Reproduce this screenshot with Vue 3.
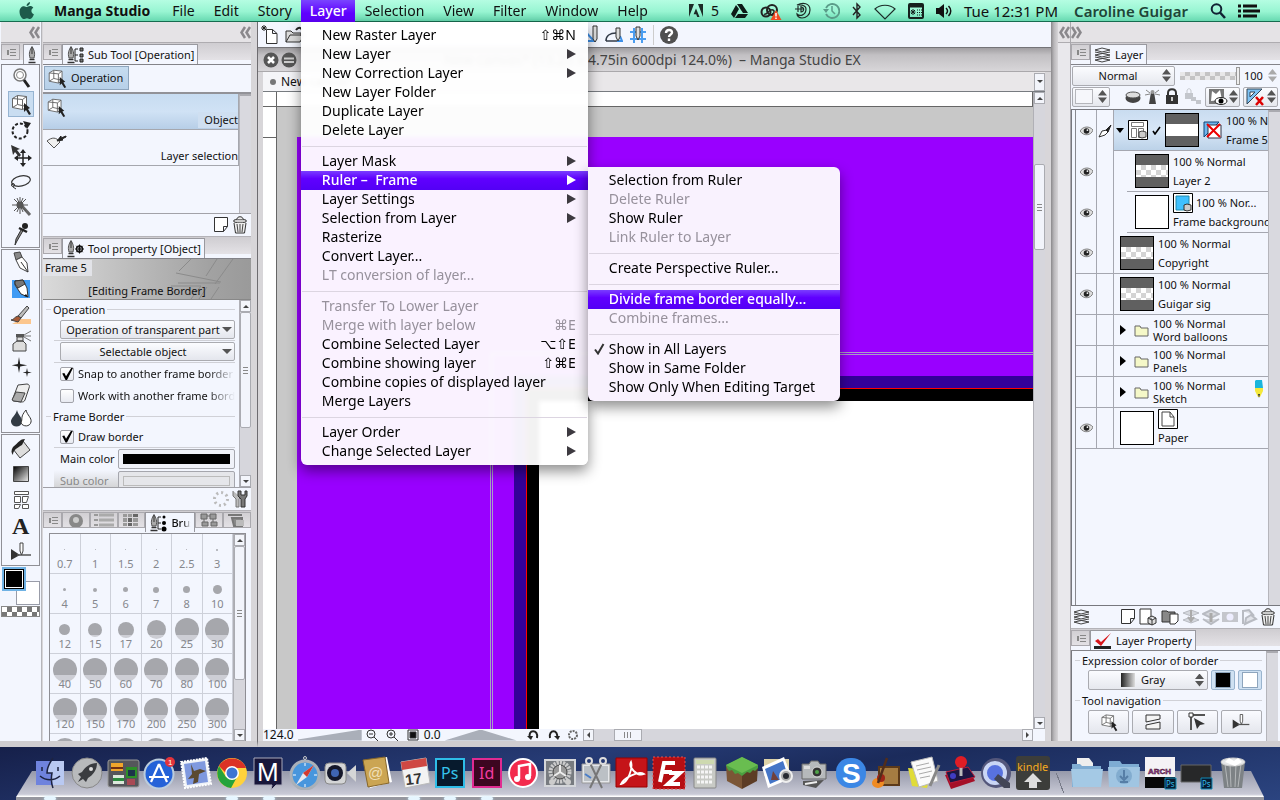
<template>
  <div class="desktop">
    <header class="menubar">
      <a class="apple" href="#" aria-label="Apple">
        <svg width="18" height="18" viewBox="0 0 18 18">
          <path d="M12 0c.2 2-1.500 4-3.400 4C8.400 2 10.200.4 12 0zM8.800 5c.8 0 1.600-.9 3.200-.9 1.500 0 2.700.7 3.300 1.700-2.800 1.600-2.300 5.400.6 6.500-.8 2.300-2.200 4.700-3.800 4.700-1.200 0-1.600-.8-3.100-.8s-2 .8-3.100.8C4 17 1.500 13.300 1.500 9.700 1.500 6.200 3.700 4.200 6 4.200c1.300 0 2.100.8 2.800.8z" fill="#1d5a4a" />
        </svg>
      </a>
      <nav class="menus">
        <div v-for="menu in menus" :key="menu" class="menu-slot">
          <button :class="['menu-name', { bold: menu === 'Manga Studio', open: menu === 'Layer' }]">{{ menu }}</button>
          <div v-if="menu === 'Layer'" class="dropdown layer-menu">
            <template v-for="(item, i) in layerMenu" :key="i">
              <hr v-if="item.sep" />
              <button v-else :class="['menu-item', { active: item.active }]" :disabled="item.off">
                <span>{{ item.text }}</span>
                <span v-if="item.keys" class="keys">{{ item.keys }}</span>
                <span v-if="item.sub" class="arrow"></span>
              </button>
            </template>
            <div class="dropdown ruler-menu">
              <template v-for="(item, i) in rulerMenu" :key="i">
                <hr v-if="item.sep" />
                <button v-else :class="['menu-item', { active: item.active }]" :disabled="item.off">
                  <svg v-if="item.check" class="menu-check" width="12" height="12" viewBox="0 0 12 12">
                    <path d="M2 6.500l3 4L10.500 1" fill="none" stroke="#333" stroke-width="2" />
                  </svg>
                  <span>{{ item.text }}</span>
                </button>
              </template>
            </div>
          </div>
        </div>
      </nav>
      <div class="status">
        <span class="adobe"><svg width="14" height="13" viewBox="0 0 14 13"><path d="M0 0h5L0 13zM9 0h5v13zM7 4.500l3.500 8.500H8.200l-1-2.700H4.600z" fill="#1c2b26" /></svg>5</span>
        <svg v-for="s in statusIcons" :key="s.name" :width="s.width" height="18" :viewBox="`0 0 ${s.width} 18`" v-html="s.art"></svg>
        <span class="clock">Tue 12:31 PM</span>
        <span class="user">Caroline Guigar</span>
        <svg width="16" height="16" viewBox="0 0 16 16"><circle cx="6.500" cy="6" r="4.800" fill="none" stroke="#123" stroke-width="2" /><path d="M10 9.500l5 5.500" stroke="#123" stroke-width="2.500" /></svg>
        <svg width="22" height="14" viewBox="0 0 22 14"><path d="M0 2h3M0 7h3M0 12h3M5 2h14M5 7h17M5 12h14" stroke="#111" stroke-width="3" /></svg>
      </div>
    </header>

    <main class="workspace">
      <aside class="left">
        <div class="tool-column">
          <div class="collapse end"><button aria-label="Collapse"><svg width="11" height="13" viewBox="0 0 11 13" v-html="icons.chevrons"></svg></button></div>
          <div class="strip">
            <span class="strip-menu"></span>
            <span class="tab small"><svg width="10" height="18" viewBox="0 0 10 18" v-html="nib"></svg></span>
          </div>
          <div v-for="(group, g) in tools" :key="g" class="tool-group">
            <button v-for="tool in group" :key="tool" :class="['tool', { selected: tool === 'operation' }]" :aria-label="tool">
              <svg width="24" height="24" viewBox="0 0 24 24" v-html="icons[tool]"></svg>
            </button>
          </div>
          <div class="colors">
            <span class="back-color"></span>
            <span class="front-color"></span>
          </div>
          <div class="clear-color"></div>
        </div>

        <div class="panels">
          <div class="collapse end"><button aria-label="Collapse"><svg width="11" height="13" viewBox="0 0 11 13" v-html="icons.chevrons"></svg></button></div>
          <div class="strip">
            <span class="strip-menu"></span>
            <span class="tab">
              <svg width="18" height="18" viewBox="0 0 18 18"><g v-html="nib"></g><path d="M12 3H9v12h3M9 9h3" fill="none" stroke="#222" /><path d="M14 2h3v3h-3zM14 8h3v3h-3zM14 13h3v3h-3z" fill="#777" stroke="#222" /></svg>
              Sub Tool [Operation]
            </span>
          </div>
          <div class="subtool-group">
            <button class="subtool-tab"><svg width="22" height="22" viewBox="0 0 24 24" v-html="icons.operation"></svg>Operation</button>
          </div>
          <div class="subtool-body">
            <ul class="subtool-list">
              <li class="selected"><svg width="22" height="22" viewBox="0 0 24 24" v-html="icons.operation"></svg><span>Object</span></li>
              <li><svg width="24" height="22" viewBox="0 0 24 22" v-html="icons.layerSelect"></svg><span>Layer selection</span></li>
            </ul>
            <div class="gutter"></div>
          </div>
          <div class="panel-foot">
            <svg width="18" height="18" viewBox="0 0 18 18" v-html="icons.page"></svg>
            <svg width="16" height="18" viewBox="0 0 16 18" v-html="icons.trash"></svg>
          </div>

          <div class="strip">
            <span class="strip-menu"></span>
            <span class="tab">
              <svg width="18" height="18" viewBox="0 0 18 18"><g v-html="nib"></g><circle cx="13.500" cy="9" r="3" fill="none" stroke="#111" stroke-width="1.300" /><path d="M13.500 4.500v9M9 9h9M10.300 5.800l6.400 6.400M16.700 5.800l-6.400 6.400" stroke="#111" /></svg>
              Tool property [Object]
            </span>
          </div>
          <div class="frame-banner">
            <svg class="banner-art" width="80" height="40" viewBox="0 0 80 40"><path d="M20 0L8 12M5 14l45 9M62 0L44 25M7 24h42M35 17L46 0M0 27h30L20 40M36 28l-8 12M48 28l-8 12" fill="none" stroke="#8b8b8b" /></svg>
            <span class="frame-name">Frame 5</span>
            <span class="frame-mode">[Editing Frame Border]</span>
          </div>
          <div class="property-body">
            <form class="properties" @submit.prevent>
              <div class="legend">Operation</div>
              <div class="row line">
                <select v-model="transparent" aria-label="Operation of transparent part"><option>Operation of transparent part</option></select>
              </div>
              <div class="row line">
                <select v-model="selectable" aria-label="Selectable object"><option>Selectable object</option></select>
              </div>
              <label class="row fade"><input v-model="snap" type="checkbox" />Snap to another frame border</label>
              <label class="row fade"><input v-model="work" type="checkbox" />Work with another frame border</label>
              <div class="legend">Frame Border</div>
              <label class="row line"><input v-model="draw" type="checkbox" />Draw border</label>
              <div class="row color"><span>Main color</span><button class="color-button" aria-label="Main color"><i></i></button></div>
              <div class="row color dim"><span>Sub color</span><button class="color-button" aria-label="Sub color"><i></i></button></div>
            </form>
            <div class="scrollbar">
              <button class="up" aria-label="Up"></button>
              <span class="thumb property-thumb"></span>
              <button class="down" aria-label="Down"></button>
            </div>
          </div>
          <div class="panel-foot">
            <svg width="18" height="18" viewBox="0 0 18 18"><circle cx="9" cy="9" r="6.500" fill="none" stroke="#bbb" stroke-width="3" stroke-dasharray="2 3" /></svg>
            <svg width="16" height="18" viewBox="0 0 16 18"><path d="M1 1v5l3 3v8h3V9l2-2" fill="#bbb" stroke="#777" /><path d="M6 1v5l3 3v8h4V9l2-3V1l-2 0v4h-4V1z" fill="#777" stroke="#333" /></svg>
          </div>

          <div class="strip brush-strip">
            <span class="strip-menu"></span>
            <span class="mini-tab"><svg width="18" height="14" viewBox="0 0 18 14"><circle cx="9" cy="8" r="7" fill="#888" /><circle cx="9" cy="7" r="3" fill="#ccc" /></svg></span>
            <span class="mini-tab"><svg width="20" height="14" viewBox="0 0 20 14"><path d="M0 2h4M0 7h4M0 12h4" stroke="#999" stroke-width="2" /><path d="M5 2h15M5 7h15M5 12h15" stroke="#aaa" stroke-width="3" /></svg></span>
            <span class="mini-tab"><svg width="16" height="14" viewBox="0 0 16 14"><path d="M0 1h4v3H0zM5 1h4v3H5zM0 5h4v4H0zM10 5h5v4h-5zM0 10h4v3H0zM10 10h5v3h-5z" fill="#999" /><path d="M10 1h5v3h-5zM5 5h4v4H5zM5 10h4v3H5z" fill="#666" /></svg></span>
            <span class="tab brush-tab">
              <svg width="18" height="18" viewBox="0 0 18 18"><g v-html="nib"></g><path d="M12 3H9v12h3M9 9h3" fill="none" stroke="#222" /><circle cx="15" cy="3" r="1.500" /><circle cx="15" cy="9" r="2" /><circle cx="15" cy="15" r="2.500" /></svg>
              <span>Brush size</span>
            </span>
            <span class="mini-tab"><svg width="18" height="14" viewBox="0 0 18 14"><path d="M1 1h6v5H1zM10 1h6v5h-6zM2 9h6v4H2zM11 9h6v4h-6zM4 6v3M13 6v3M7 3h3" fill="#999" stroke="#666" /></svg></span>
            <span class="mini-tab"><svg width="18" height="14" viewBox="0 0 18 14"><path d="M0 2h14M4 5h10v8H6z" fill="#888" stroke="#777" stroke-width="2" /><path d="M8 7h8v6H8z" fill="#bbb" /></svg></span>
          </div>
          <div class="brush-body">
            <div class="brush-grid">
              <button v-for="brush in brushes" :key="brush.label" class="brush">
                <span class="dot" :style="{ width: brush.size + 'px', height: brush.size + 'px' }"></span>
                <span class="brush-label">{{ brush.label }}</span>
              </button>
            </div>
            <div class="scrollbar">
              <button class="up" aria-label="Up"></button>
              <span class="thumb brush-thumb"></span>
              <button class="down" aria-label="Down"></button>
            </div>
          </div>
        </div>
      </aside>

      <section class="document">
        <div class="toolbar">
          <svg width="18" height="20" viewBox="0 0 18 20"><path d="M5.500 4.500h6l4.500 4V18.500H5.500zM11.500 4.500v4h4.500" fill="#fff" stroke="#333" /><path d="M3 0v6M0 3h6M1 1l4 4M5 1L1 5" stroke="#222" /></svg>
          <svg width="20" height="20" viewBox="0 0 20 20"><path d="M1 17V6h5l2 2h8v3M1 17l4-7h14l-4 7z" fill="#ddd" stroke="#333" /><path d="M11 5c2-3 5-3 6 0" fill="none" stroke="#222" stroke-width="2" /></svg>
          <span class="toolbar-space"></span>
          <svg width="18" height="20" viewBox="0 0 18 20"><path d="M2 16h11L2 4" fill="none" stroke="#3c8fe8" stroke-width="2" /><path d="M12 1h4v13l-2 3-2-3z" fill="#ddd" stroke="#333" /></svg>
          <svg width="18" height="20" viewBox="0 0 18 20"><path d="M1 16c0-5 4-8 10-8M1 16h11" fill="none" stroke="#333b48" stroke-width="1.600" /><path d="M12 16h5l-2-5" fill="none" stroke="#3c8fe8" stroke-width="2" /><path d="M11 3h4v9l-2 4-2-4z" fill="#ddd" stroke="#333" /></svg>
          <svg width="18" height="20" viewBox="0 0 18 20"><path d="M1 7h16M1 14h16M5 3v15M13 3v15" stroke="#4a9df0" stroke-width="2" /><path d="M7 2h4v9l-2 4-2-4z" fill="#ddd" stroke="#333" /></svg>
          <span class="toolbar-rule"></span>
          <svg width="18" height="18" viewBox="0 0 18 18"><circle cx="9" cy="9" r="9" fill="#505050" /><path d="M6 7c0-4 6-4 6-.500 0 2-3 2-3 4.500M9 12.500v2.500" fill="none" stroke="#fff" stroke-width="2.400" /></svg>
        </div>

        <div class="titlebar">
          <div class="window-buttons">
            <svg width="36" height="16" viewBox="0 0 36 16"><circle cx="8" cy="8" r="7.500" fill="#565656" /><path d="M5 5l6 6M11 5l-6 6" stroke="#fff" stroke-width="2.500" /><circle cx="26" cy="8" r="7.500" fill="#565656" /><path d="M21 6.500h10M21 10h10" stroke="#ccc" stroke-width="2" /></svg>
          </div>
          <h1>New canvas* (13.25 x 4.75in 600dpi 124.0%)&nbsp; – Manga Studio EX</h1>
        </div>

        <div class="doc-tabs">
          <span class="doc-tab"><i></i>New canvas*</span>
          <button class="tab-list" aria-label="Tabs"></button>
        </div>

        <div class="canvas-grid">
          <div class="corner"></div>
          <div class="ruler-top"></div>
          <div class="ruler-left"></div>
          <div class="canvas">
            <div class="artboard">
              <div class="guide">
                <div class="bleed">
                  <div class="trim">
                    <div class="frame"></div>
                  </div>
                </div>
              </div>
            </div>
          </div>
          <div class="scrollbar canvas-scroll">
            <button class="up" aria-label="Up"></button>
            <span class="thumb canvas-thumb"></span>
            <button class="down" aria-label="Down"></button>
          </div>
        </div>

        <div class="statusbar">
          <span class="zoom">124.0</span>
          <span class="wedge"></span>
          <svg width="54" height="12" viewBox="0 0 54 12"><g fill="none" stroke="#333"><circle cx="5" cy="5" r="4" /><path d="M3 5h4M8 8l4 4" /><circle cx="25" cy="5" r="4" /><path d="M23 5h4M25 3v4M28 8l4 4" /><path d="M42 1h10v10H42z" /><path d="M44 3h6v6h-6z" fill="#111" /></g></svg>
          <span>0.0</span>
          <span class="wedge wide"></span>
          <svg width="52" height="12" viewBox="0 0 52 12"><path d="M3 9c-3-9 9-9 7 0M23 9c-2-9 9-9 7 0" fill="none" stroke="#222" stroke-width="2" /><path d="M0 7h6l-2 4zM27 7h6l-2 4z" fill="#222" /><circle cx="46" cy="6" r="4" fill="none" stroke="#666" stroke-width="2" stroke-dasharray="2 1" /></svg>
          <div class="hscroll">
            <button class="back" aria-label="Left"></button>
            <span class="hthumb"></span>
            <button class="forward" aria-label="Right"></button>
          </div>
        </div>
      </section>

      <aside class="right">
        <div class="side-column">
          <div class="collapse end"><button aria-label="Collapse"><svg width="11" height="13" viewBox="0 0 11 13" v-html="icons.chevrons"></svg></button></div>
        </div>
        <div class="panels">
          <div class="collapse"><button class="flip" aria-label="Expand"><svg width="11" height="13" viewBox="0 0 11 13" v-html="icons.chevrons"></svg></button></div>
          <div class="strip">
            <span class="strip-menu"></span>
            <span class="tab"><svg width="17" height="16" viewBox="0 0 17 16" v-html="icons.stack"></svg>Layer</span>
          </div>
          <div class="layer-options">
            <span class="stepper mode"><select v-model="blend" aria-label="Blending mode"><option>Normal</option></select></span>
            <input v-model="opacity" class="opacity" type="range" min="0" max="100" aria-label="Opacity" />
            <span class="stepper plain"><input v-model="opacity" class="amount" type="text" aria-label="Opacity value" /></span>
          </div>
          <div class="layer-options">
            <button class="stepper palette" aria-label="Palette color"><i></i></button>
            <svg class="layer-tools" width="78" height="18" viewBox="0 0 78 18">
              <ellipse cx="9" cy="10" rx="7.500" ry="5" fill="#444" /><ellipse cx="9" cy="7" rx="7" ry="3" fill="#ddd" stroke="#555" />
              <path d="M27 4h3l2 12h-7z" fill="#444" /><path d="M22 2l4 3M35 2l-4 3M21 7l5-1M36 7l-5-1" stroke="#888" /><circle cx="28.500" cy="4" r="2" fill="#999" />
              <path d="M44 8V5c0-5 8-5 8 0v3" fill="none" stroke="#333" stroke-width="2" /><rect x="42" y="7" width="12" height="9" fill="#333" /><path d="M48 9v4" stroke="#ccc" stroke-width="2" />
              <path d="M63 5V3c0-3 4-3 4 0v2" fill="none" stroke="#c3c6cc" /><path d="M61 5h8v6h-8zM67 9h5v4h-5zM72 12h5v4h-5z" fill="#c3c6cc" />
            </svg>
            <button class="stepper mask" aria-label="Mask"><svg width="20" height="18" viewBox="0 0 20 18"><path d="M1 1h15v15H1z" fill="#777" /><path d="M3 13l1-10 4 3 4-4 2 10z" fill="#fff" /><ellipse cx="13" cy="13" rx="6" ry="3.500" fill="#fff" stroke="#222" /><circle cx="13" cy="13" r="2.500" /></svg></button>
            <button class="stepper mask" aria-label="Ruler"><svg width="20" height="18" viewBox="0 0 20 18"><path d="M1 1h15L1 16z" fill="#7ec3f5" stroke="#345" /><path d="M4 4h5L4 9z" fill="#fff" stroke="#345" /><path d="M10 9l7 8M17 9l-7 8" stroke="#d00" stroke-width="2.500" /></svg></button>
          </div>
          <div class="layer-body">
            <ul class="layers">
              <li v-for="layer in layers" :key="layer.name" :class="['layer', layer.kind, { selected: layer.selected, child: layer.child }]">
                <button class="eye" aria-label="Visibility"><svg v-if="layer.visible" width="13" height="10" viewBox="0 0 14 10"><path d="M0 5c3-5 10-6 14-1-2 6-10 7-14 1z" fill="#ddd" stroke="#777" /><circle cx="7" cy="5" r="3" fill="#222" /><circle cx="8" cy="4" r="1" fill="#fff" /></svg></button>
                <span class="edit"><svg v-if="layer.selected" width="14" height="14" viewBox="0 0 14 14"><path d="M1 13l3-6 5-1 1 2-3 3z" fill="#fff" stroke="#333" /><path d="M8 6l5-5-3 7z" fill="#222" stroke="#222" /></svg></span>
                <span class="layer-main">
                  <template v-if="layer.selected">
                    <i class="triangle open"></i>
                    <svg width="20" height="20" viewBox="0 0 20 20"><path d="M.5.5h19v19H.5z" fill="#fff" stroke="#000" /><path d="M3.500 2.500h12v4h-12zM3.500 8.500h5v9h-5zM10.500 8.500h5v9h-5z" fill="none" stroke="#777" /><path d="M11 12l3-1 4 1v5l-4 1-3-1z" fill="#ccc" stroke="#444" /></svg>
                    <svg width="9" height="9" viewBox="0 0 9 9"><path d="M1 5l2 3 5-7" fill="none" stroke="#000" stroke-width="1.600" /></svg>
                  </template>
                  <template v-if="layer.kind === 'folder'">
                    <i class="triangle"></i>
                    <svg width="15" height="13" viewBox="0 0 15 13"><path d="M1 2h5l1 2h7v8H1z" fill="#f5f8c8" stroke="#666" /></svg>
                  </template>
                  <span v-else :class="['thumbnail', layer.thumb]"><i></i></span>
                  <svg v-if="layer.selected" width="19" height="20" viewBox="0 0 19 20"><path d="M1 2h15L1 17z" fill="#6fb7ef" stroke="#147" /><path d="M5 5h13v13H5z" fill="#fff" stroke="#334" /><path d="M4 4l13 13M17 4L4 17" stroke="#e00" stroke-width="2" /></svg>
                  <span class="layer-text">
                    <span class="layer-mode">
                      <svg v-if="layer.name.startsWith('Frame b')" width="20" height="20" viewBox="0 0 20 20"><path d="M.5.5h19v19H.5z" fill="#fff" stroke="#000" /><path d="M3 3h13v14H3z" fill="#3fc0ff" stroke="#28a" /><path d="M11 12l3-1 4 1v5l-4 1-3-1z" fill="#ccc" stroke="#333" /></svg>
                      <svg v-if="layer.name === 'Paper'" width="20" height="20" viewBox="0 0 20 20"><path d="M.5.5h19v19H.5z" fill="#fff" stroke="#000" /><path d="M4 3h8l4 5v9H4zM12 3v5h4" fill="none" stroke="#444" /></svg>
                      <template v-else>{{ layer.mode }}</template>
                    </span>
                    <span>{{ layer.name }}</span>
                  </span>
                  <svg v-if="layer.name === 'Sketch'" class="pencil" width="8" height="18" viewBox="0 0 8 18"><path d="M1 0h6l1 8H0V1z" fill="#19b5dc" /><path d="M0 8h8v3l-3 6H3L0 11z" fill="#f4e83a" /><path d="M3 14h2l-1 4z" fill="#333" /></svg>
                </span>
              </li>
            </ul>
            <div class="gutter"></div>
          </div>
          <div class="panel-foot layer-foot">
            <svg width="17" height="16" viewBox="0 0 17 16" v-html="icons.stack"></svg>
            <span class="foot-space"></span>
            <svg width="18" height="18" viewBox="0 0 18 18" v-html="icons.page"></svg>
            <svg width="20" height="18" viewBox="0 0 20 18"><path d="M1 1h11v15H1z" fill="#fff" stroke="#333" /><path d="M9 10l4-2 4 2v5l-4 2-4-2zM9 10l4 2 4-2M13 12v5" fill="#ddd" stroke="#333" /></svg>
            <svg width="19" height="18" viewBox="0 0 19 18"><path d="M1 3h5l1 1h7v10H1z" fill="#888" stroke="#333" /><path d="M9 6h8v7l-3 3H9z" fill="#fff" stroke="#333" /></svg>
            <svg width="18" height="18" viewBox="0 0 18 18"><path d="M1 5l8-3 8 3-8 3zM1 12l8-3 8 3-8 3z" fill="#d5d8de" stroke="#b8bbc2" /><path d="M9 2v10M6 9l3 4 3-4" fill="none" stroke="#aaa" stroke-width="2" /></svg>
            <svg width="18" height="18" viewBox="0 0 18 18"><path d="M1 6l8-4 8 4-8 4zM1 11l8 5 8-5" fill="#d5d8de" stroke="#b8bbc2" stroke-width="2" /><path d="M9 5v9" stroke="#aaa" stroke-width="3" /></svg>
            <svg width="16" height="18" viewBox="0 0 16 18"><path d="M0 4h16v10H0z" fill="#c4c6cc" /><circle cx="8" cy="9" r="3.500" fill="#eef" /></svg>
            <svg width="18" height="18" viewBox="0 0 18 18"><path d="M3 2v14M3 3l6-1 5 6M5 16l4-2 7-3-5-4-5 3z" fill="#e0e2e8" stroke="#b8bbc2" stroke-width="2" /></svg>
            <svg width="16" height="18" viewBox="0 0 16 18" v-html="icons.trash"></svg>
          </div>

          <div class="strip">
            <span class="strip-menu"></span>
            <span class="tab"><svg width="18" height="16" viewBox="0 0 18 16"><path d="M0 13h17v3H0z" fill="#222" /><path d="M1 8l3-2 3 3L17 0 7 13z" fill="#d8151b" /></svg>Layer Property</span>
          </div>
          <div class="layer-property">
            <div class="property-controls">
              <div class="legend">Expression color of border</div>
              <div class="expression">
                <span class="stepper gray"><i></i><select v-model="expression" aria-label="Expression color"><option>Gray</option></select></span>
                <button class="ink black" aria-label="Black"></button>
                <button class="ink" aria-label="White"></button>
              </div>
              <div class="legend">Tool navigation</div>
              <div class="navigation">
                <button aria-label="Object"><svg width="22" height="20" viewBox="0 0 24 24" v-html="icons.operation"></svg></button>
                <button aria-label="Divide frame"><svg width="18" height="18" viewBox="0 0 18 18"><path d="M2 2h14v4L2 9zM2 12l14-3v7H2z" fill="#f4f4f4" stroke="#333" /></svg></button>
                <button aria-label="Edit line"><svg width="20" height="20" viewBox="0 0 20 20"><path d="M4 18V3h14" fill="none" stroke="#555" stroke-width="2" /><path d="M2 1h4v4H2z" fill="#fff" stroke="#333" /><path d="M7 6l11 6-5 1-3 4z" fill="#333" /></svg></button>
                <button aria-label="Ruler"><svg width="22" height="20" viewBox="0 0 24 24" v-html="icons.figure"></svg></button>
              </div>
            </div>
            <div class="gutter"></div>
          </div>
        </div>
      </aside>
    </main>

    <footer class="dock">
      <template v-for="app in dock" :key="app.name">
        <span v-if="app.name === 'divider'" class="dock-divider"></span>
        <a v-else href="#" :aria-label="app.name" :class="['dock-app', { running: app.running }]">
          <svg width="34" height="34" viewBox="0 0 34 34" v-html="app.art"></svg>
        </a>
      </template>
    </footer>
  </div>
</template>

<script setup>
import { ref } from 'vue'

const transparent = ref('Operation of transparent part')
const selectable = ref('Selectable object')
const snap = ref(true)
const work = ref(false)
const draw = ref(true)
const blend = ref('Normal')
const opacity = ref(100)
const expression = ref('Gray')

const menus = ['Manga Studio', 'File', 'Edit', 'Story', 'Layer', 'Selection', 'View', 'Filter', 'Window', 'Help']

const layerMenu = [
  { text: 'New Raster Layer', keys: '⇧⌘N' },
  { text: 'New Layer', sub: true },
  { text: 'New Correction Layer', sub: true },
  { text: 'New Layer Folder' },
  { text: 'Duplicate Layer' },
  { text: 'Delete Layer' },
  { sep: true },
  { text: 'Layer Mask', sub: true },
  { text: 'Ruler –  Frame', sub: true, active: true },
  { text: 'Layer Settings', sub: true },
  { text: 'Selection from Layer', sub: true },
  { text: 'Rasterize' },
  { text: 'Convert Layer...' },
  { text: 'LT conversion of layer...', off: true },
  { sep: true },
  { text: 'Transfer To Lower Layer', off: true },
  { text: 'Merge with layer below', keys: '⌘E', off: true },
  { text: 'Combine Selected Layer', keys: '⌥⇧E' },
  { text: 'Combine showing layer', keys: '⇧⌘E' },
  { text: 'Combine copies of displayed layer' },
  { text: 'Merge Layers' },
  { sep: true },
  { text: 'Layer Order', sub: true },
  { text: 'Change Selected Layer', sub: true }
]

const rulerMenu = [
  { text: 'Selection from Ruler' },
  { text: 'Delete Ruler', off: true },
  { text: 'Show Ruler' },
  { text: 'Link Ruler to Layer', off: true },
  { sep: true },
  { text: 'Create Perspective Ruler...' },
  { sep: true },
  { text: 'Divide frame border equally...', active: true },
  { text: 'Combine frames...', off: true },
  { sep: true },
  { text: 'Show in All Layers', check: true },
  { text: 'Show in Same Folder' },
  { text: 'Show Only When Editing Target' }
]

const statusIcons = [
  { name: 'drive', width: 17, art: '<path d="M6 2h5l6 9h-5zM5 3l3 4-5 9-3-4zM7 12h10l-3 4H4z" fill="#0d1b18"/>' },
  { name: 'cloud', width: 22, art: '<circle cx="6" cy="10" r="4.500" fill="none" stroke="#222" stroke-width="2"/><circle cx="12" cy="8" r="5" fill="none" stroke="#222" stroke-width="2"/><path d="M4 12c3 2 5-6 9-4 2 1 1 4-1 4" fill="none" stroke="#222" stroke-width="1.500"/><path d="M16 8l5.500 10h-11z" fill="#f04a23"/><path d="M16 11v3.500M16 15.500v1.500" stroke="#fff" stroke-width="1.500"/>' },
  { name: 'disk', width: 17, art: '<path d="M3 3c6-3 13-2 13 5 0 5-4 8-8 8-3 0-5-2-5-4 3 3 9 1 9-5 0-3-3-4-6-4zM1 7h8M4 4v6M7 4v6c3 0 4-5 0-5" fill="none" stroke="#1e2b27" stroke-width="1.200"/>' },
  { name: 'backup', width: 17, art: '<path d="M3 6a7 7 0 1 1 0 6" fill="none" stroke="#5a9c89" stroke-width="1.800"/><path d="M0 7h6l-3 4z" fill="#5a9c89"/><path d="M9 4v5l3 3" fill="none" stroke="#5a9c89" stroke-width="1.500"/>' },
  { name: 'bluetooth', width: 10, art: '<path d="M1 5l7 8-3 3V2l3 3-7 8" fill="none" stroke="#222" stroke-width="1.400"/>' },
  { name: 'wifi', width: 22, art: '<path d="M1 7c5-5 15-5 20 0L11 17z" fill="none" stroke="#1c2b28" stroke-width="1.200"/>' },
  { name: 'input', width: 16, art: '<rect x="1" y="2" width="14" height="14" rx="1" fill="none" stroke="#15201d" stroke-width="2"/><path d="M1 4h14" stroke="#15201d" stroke-width="3"/><path d="M5 7v6M2.500 10h5M3 8l4 4M7 8l-4 4" stroke="#15201d"/><path d="M9 8h5M9 10.500h5M9 13h5" stroke="#15201d" stroke-dasharray="1 1"/>' },
  { name: 'volume', width: 16, art: '<path d="M0 6h3l5-4v14l-5-4H0z" fill="#111"/><path d="M10 6c2 2 2 4 0 6M12.500 4c3 3 3 7 0 10" fill="none" stroke="#111" stroke-width="1.500"/>' }
]

const tools = [
  ['magnify', 'operation', 'rotate', 'move', 'lasso', 'wand', 'dropper'],
  ['pen', 'pencil', 'brush', 'airbrush', 'decoration', 'eraser', 'blend'],
  ['fill', 'gradient', 'frame', 'text', 'figure']
]

const nib = '<path d="M5 .5C3 4 1.500 7 3 12h4C8.500 7 7 4 5 .5z" fill="#aaa" stroke="#555"/><path d="M5 1v7" stroke="#333"/><path d="M2.500 13.500h5M1.500 16.500h7" stroke="#333" stroke-width="1.500"/>'

const icons = {
  chevrons: '<path d="M5 1L1.500 6.500 5 12M10 1L6.500 6.500 10 12" fill="none" stroke="#8a888c" stroke-width="2.500"/>',
  magnify: '<circle cx="11" cy="9" r="6" fill="#fff" stroke="#777" stroke-width="1.500"/><circle cx="11" cy="9" r="3.500" fill="none" stroke="#888"/><path d="M15 14l5 7" stroke="#222" stroke-width="3"/>',
  operation: '<path d="M3.500 6.500l5-3 9 1v11l-4 2-10-2zM3.500 6.500l10 1v10M13.500 7.500l4-3M8.500 3.500v9l-5 3M8.500 12.500l9 2" fill="#fff" stroke="#666"/><path d="M15 11l6 5-2 1 3 5-2 1-3-5-2 2z" fill="#222"/>',
  rotate: '<circle cx="11" cy="13" r="7.500" fill="none" stroke="#222" stroke-width="2" stroke-dasharray="3 2"/><path d="M14 3l8 2-4 6z" fill="#222"/>',
  move: '<path d="M2 1l9 4-3 1 4 5-2 2-4-5-2 3z" fill="#333"/><path d="M14 8v13M7 14h14" stroke="#222" stroke-width="1.500"/><path d="M14 5l3 4h-6zM14 23l3-4h-6zM5 14l4-3v6zM23 14l-4-3v6z" fill="#222"/>',
  lasso: '<ellipse cx="12" cy="11" rx="9.500" ry="5" fill="none" stroke="#333" stroke-width="1.200" transform="rotate(-12 12 11)"/><circle cx="4" cy="15" r="1.500" fill="none" stroke="#333"/><path d="M4 17l3 2" stroke="#333"/>',
  wand: '<path d="M12 9l9 10" stroke="#666" stroke-width="3"/><path d="M11 1v17M3 9h16M5 3l12 12M17 3L5 15M8 2l6 14M14 2L8 16" stroke="#555"/><circle cx="11" cy="9" r="3.500" fill="#555"/>',
  dropper: '<path d="M15 7L8 19l-2 4 1-6 5-9" fill="#888" stroke="#333"/><path d="M10 6l8 4" stroke="#222" stroke-width="2.500"/><circle cx="16" cy="4" r="3" fill="#222"/>',
  pen: '<path d="M5 2l6-1 2 5-6 3z" fill="#888" stroke="#444"/><path d="M7 9l6-3 5 6 1 9-8-4z" fill="#fff" stroke="#444"/><path d="M12 11l7 10" stroke="#333"/>',
  pencil: '<path d="M3 3h18v18H3z" fill="#3f9bf4"/><path d="M6 4l8-1 4 8 1 9-7-3-6-9z" fill="#fff" stroke="#333"/><path d="M6 4l8-1 2 4-7 4-3-4z" fill="#777" stroke="#333"/><path d="M17 17l2 3-4-1z" fill="#111"/>',
  brush: '<path d="M12 16h10v5H3z" fill="#fcc68d"/><path d="M18 3l2 2-8 10-3-2z" fill="#bbb" stroke="#444"/><path d="M9 13l3 2-3 4-7-2c3 0 3-3 7-4z" fill="#a85b36" stroke="#444"/>',
  airbrush: '<path d="M4 15l4-3h6l3 3v7H4zM8 8h6v4H8z" fill="#ddd" stroke="#444"/><path d="M7 5h8v3H7z" fill="#555"/><path d="M15 6l7-4M15 7h7M15 8l7 4" stroke="#777"/>',
  decoration: '<path d="M10 2l1.200 7 7 1.200-7 1.200L10 18l-1.200-6.600-6-1.200 6-1.200zM18 13l.8 3.700 4 .8-4 .8L18 22l-.8-3.700-3.500-.8 3.500-.8z" fill="#222"/>',
  eraser: '<path d="M9 4l9-1c2 0 3 2 2 4l-4 12c-1 2-2 2-4 2l-7-1c-2 0-2-2-1-3z" fill="#eee" stroke="#444"/><path d="M7 11l9 1-4 9-7-1c-2 0-2-2-1-3z" fill="#aaa" stroke="#444"/>',
  blend: '<path d="M8 3c1 5 6 8 5 12-1 6-10 6-11 0-.5-4 5-7 6-12z" fill="#333b44"/><path d="M17 3c1 5 6 8 5 12-1 5-8 5-10 1 2-5-1-6 5-13z" fill="#fff" stroke="#333"/>',
  fill: '<path d="M4 13l10-8 7 9-10 8z" fill="#ddd" stroke="#444"/><path d="M4 11c-2 3-2 6 0 8 0-5 4-7 9-10l3-6c-5 0-6 3-12 8z" fill="#222"/>',
  gradient: '<defs><linearGradient id="ramp" x2="1" y2="1"><stop stop-color="#000"/><stop offset="1" stop-color="#eee"/></linearGradient></defs><path d="M4.500 4.500h15v15h-15z" fill="url(#ramp)" stroke="#444"/>',
  frame: '<path d="M5.500 3.500h14v3h-14zM5.500 8.500h6v6h-6zM13.500 8.500h6l-2 6h-4zM5.500 16.500h6l-2 4h-4zM13.500 16.500h6v4h-6z" fill="#fff" stroke="#555"/>',
  text: '<text x="3" y="20" font-family="Liberation Serif" font-size="24" font-weight="bold" fill="#222">A</text>',
  figure: '<path d="M2 9l9 6-9 5z" fill="#333"/><path d="M8 15h14" stroke="#555" stroke-width="1.500"/><path d="M11 3h3v8l-1.500 4-1.500-4z" fill="#fff" stroke="#444"/>',
  layerSelect: '<path d="M2 9c5-4 9-4 13 1l-6 6z" fill="#f0f0f0" stroke="#555"/><path d="M21 4l-5 2 0-2-4 5 6-1-1-1 4-2z" fill="#222" stroke="#222"/>',
  page: '<path d="M2.500 1.500h13v9l-4 5h-9zM15.500 10.500h-4v5" fill="#fff" stroke="#333"/>',
  trash: '<ellipse cx="8" cy="5" rx="6.500" ry="2" fill="#ccc" stroke="#333"/><path d="M5 3c0-3 6-3 6 0M2 7l1.500 10h9L14 7" fill="#eee" stroke="#333"/><path d="M5 8l1 8M8 8v8M11 8l-1 8" stroke="#444"/>',
  stack: '<path d="M1 3l7-2 8 2-8 2zM1 5l15 3M1 8l15-3M1 10l15 3M1 13l15-3M1 13l7 2 8-2M1 8l7 2 8-2" fill="none" stroke="#444"/>'
}

const brushSizes = [
  ['0.7', 1], ['1', 1], ['1.5', 1], ['2', 1], ['2.5', 1], ['3', 2],
  ['4', 3], ['5', 4], ['6', 5], ['7', 6], ['8', 7], ['10', 9],
  ['12', 11], ['15', 14], ['17', 16], ['20', 19], ['25', 24], ['30', 24],
  ['40', 24], ['50', 24], ['60', 24], ['70', 24], ['80', 24], ['100', 24],
  ['120', 24], ['150', 24], ['170', 24], ['200', 24], ['250', 24], ['300', 24],
  ['400', 24], ['500', 24], ['600', 24], ['700', 24], ['800', 24], ['1000', 24]
]
const brushes = brushSizes.map(([label, size]) => ({ label, size }))

const layers = [
  { name: 'Frame 5', mode: '100 % Normal', visible: true, selected: true, thumb: 'band' },
  { name: 'Layer 2', mode: '100 % Normal', visible: true, child: true, thumb: 'clear' },
  { name: 'Frame background', mode: '100 % Nor...', visible: true, child: true, thumb: 'white' },
  { name: 'Copyright', mode: '100 % Normal', visible: true, thumb: 'clear' },
  { name: 'Guigar sig', mode: '100 % Normal', visible: true, thumb: 'clear' },
  { name: 'Word balloons', mode: '100 % Normal', kind: 'folder' },
  { name: 'Panels', mode: '100 % Normal', kind: 'folder' },
  { name: 'Sketch', mode: '100 % Normal', kind: 'folder' },
  { name: 'Paper', mode: '', visible: true, thumb: 'white' }
]

const dock = [
  { name: 'Finder', running: true, art: '<path d="M3 5h28v24H3z" fill="#b9c9f2"/><path d="M3 5h15c-3 6-4 9-3 12h4c-1 5 0 9 1 12H3z" fill="#6f83dd"/><path d="M20 2c-5 7-6 11-6 15h5c-1 5-1 10 1 15M9 11v4M25 11v4M7 20c6 5 14 5 20 0" fill="none" stroke="#1d2340" stroke-width="1.500"/>' },
  { name: 'Launchpad', art: '<circle cx="17" cy="17" r="15" fill="#b8babc" stroke="#888"/><path d="M27 7c-7 0-12 4-15 9l-4 2 3 3-3 5 5-3 3 3 2-4c5-3 9-8 9-15z" fill="#3a3c40"/><circle cx="21" cy="13" r="2" fill="#ddd"/>' },
  { name: 'Mission Control', art: '<rect x="2" y="4" width="31" height="27" rx="2" fill="#55565b" stroke="#999"/><path d="M5 7h12v8H5z" fill="#f0a52b"/><path d="M5 11h12v2H5z" fill="#712e12"/><path d="M7 19h11v9H7z" fill="#dce8db"/><path d="M7 22h11v3H7z" fill="#2b8a3e"/><path d="M20 11h11v11H20z" fill="#2d8f28"/><path d="M22 14h7v6h-7z" fill="#1c344a"/><path d="M21 23h8v6h-8z" fill="#a84a55"/>' },
  { name: 'App Store', art: '<circle cx="17" cy="18" r="14.500" fill="#2462d8" stroke="#bcd" stroke-width="2"/><path d="M17 8l8 18M17 8L9 26M7 21h20" stroke="#fff" stroke-width="2.200"/><circle cx="28" cy="6" r="5" fill="#e3343b"/><text x="26" y="9" font-family="Liberation Sans" font-size="8" fill="#fff">1</text>' },
  { name: 'Mail', art: '<path d="M2 6l26-4 4 26-26 4z" fill="#eef2f7" stroke="#fff" stroke-width="2" stroke-dasharray="2 1"/><path d="M5 8l21-3 3 21-21 3z" fill="#7f99df"/><path d="M12 8l3 7 6-2 6 2-7 3-1 8-5 2 1-6-6 1 4-5z" fill="#5b4a30"/>' },
  { name: 'Chrome', running: true, art: '<circle cx="17" cy="17" r="15" fill="#ffd23c"/><path d="M4 10A15 15 0 0 1 31 12H17l-6 5z" fill="#db3226"/><path d="M4 10A15 15 0 0 0 16 32l6-11H11z" fill="#25a33c"/><circle cx="17" cy="17" r="7" fill="#fff"/><circle cx="17" cy="17" r="5.500" fill="#3e74d2"/>' },
  { name: 'Manga Studio', running: true, art: '<path d="M2 2h28v27h-6l-5 5 1-5H2z" fill="#18163a" stroke="#aab"/><text x="5" y="25" font-family="Liberation Sans" font-size="26" fill="#fff">M</text>' },
  { name: 'Safari', art: '<circle cx="17" cy="19" r="14" fill="#4796dd" stroke="#a9b0b8" stroke-width="3"/><path d="M26 9l-7 12-11 8 7-12z" fill="#e9e9ee"/><path d="M26 9L15 17l4 4z" fill="#d33a2f"/><circle cx="17" cy="2" r="1.500" fill="none" stroke="#ccc"/><path d="M17 7v3M17 28v3M5 19h3M26 19h3" stroke="#fff"/>' },
  { name: 'FaceTime', art: '<rect x="1" y="7" width="21" height="21" rx="4" fill="#d4d5d6" stroke="#888"/><circle cx="11" cy="17" r="8" fill="#15182b"/><circle cx="11" cy="17" r="4" fill="#3f65b2"/><path d="M23 17l9-8v17z" fill="#d4d5d6"/>' },
  { name: 'Contacts', art: '<path d="M4 5l22-4 5 25-22 6z" fill="#fff"/><path d="M2 4l22-3 4 26-21 4z" fill="#cba553" stroke="#86662b"/><text x="7" y="22" font-family="Liberation Sans" font-size="15" fill="#f0dfb6">@</text>' },
  { name: 'Calendar', running: true, art: '<path d="M4 6l25-4 4 25-25 5z" fill="#f3f3f3" stroke="#bbb"/><path d="M4 6l25-4 1 8-25 4z" fill="#cf4843"/><text x="8" y="28" font-family="Liberation Sans" font-size="15" font-weight="bold" fill="#333" transform="rotate(-8 18 21)">17</text>' },
  { name: 'Photoshop', running: true, art: '<rect x="3" y="3" width="28" height="28" fill="#071a2d" stroke="#2ebde8" stroke-width="2"/><text x="8" y="23" font-family="Noto Sans" font-size="16" fill="#36c4ec">Ps</text>' },
  { name: 'InDesign', running: true, art: '<rect x="3" y="3" width="28" height="28" fill="#3c0620" stroke="#e02b91" stroke-width="2"/><text x="9" y="23" font-family="Noto Sans" font-size="16" fill="#f23ca0">Id</text>' },
  { name: 'iTunes', art: '<circle cx="17" cy="17" r="14" fill="#f32b4d" stroke="#fff" stroke-width="2"/><path d="M13 23V10l11-2v12" fill="none" stroke="#fff" stroke-width="2.500"/><circle cx="11" cy="23" r="3" fill="#fff"/><circle cx="22" cy="21" r="3" fill="#fff"/>' },
  { name: 'Preferences', art: '<rect x="2" y="4" width="30" height="26" fill="#777b80" stroke="#d4d6da" stroke-width="2"/><circle cx="17" cy="16" r="9" fill="none" stroke="#ccc" stroke-width="5" stroke-dasharray="2 1"/><circle cx="17" cy="16" r="7" fill="#999" stroke="#444"/><path d="M17 9v7l-6 4M17 16l6 4" fill="none" stroke="#eee" stroke-width="2"/><circle cx="9" cy="26" r="3" fill="#ccc"/><circle cx="25" cy="26" r="3" fill="#ccc"/>' },
  { name: 'Grab', art: '<path d="M3 8h28v19H3z" fill="#e5e7ea" stroke="#999"/><path d="M5 10h24v15H5z" fill="#bbc0c5"/><path d="M6 18l6 4" stroke="#4b7dc7" stroke-width="2"/><path d="M23 7L11 32M11 7l12 25" stroke="#777" stroke-width="2"/><circle cx="10" cy="5" r="3" fill="none" stroke="#ddd" stroke-width="2"/><circle cx="24" cy="5" r="3" fill="none" stroke="#ddd" stroke-width="2"/>' },
  { name: 'Acrobat', art: '<path d="M1 2h31v29H1z" fill="#c51419" stroke="#900"/><path d="M16 6c-3 5 6 15 13 12-6-4-21 5-23 10 7-1 12-16 10-22z" fill="none" stroke="#fff" stroke-width="1.800"/>' },
  { name: 'FileZilla', art: '<path d="M1 1h32v32H1z" fill="#b60e12" stroke="#d55" stroke-dasharray="2 2"/><path d="M8 26l4-19h11M10 16h10M17 17h11L16 28h12" fill="none" stroke="#fff" stroke-width="4"/>' },
  { name: 'Calculator', art: '<rect x="6" y="2" width="22" height="30" rx="1" fill="#c8cac5" stroke="#888"/><path d="M8 4h18v4H8z" fill="#cdd9af"/><path d="M9 11h16M9 16h16M9 21h16M9 26h16" stroke="#f5f5f5" stroke-width="3" stroke-dasharray="3 1"/>' },
  { name: 'Minecraft', art: '<path d="M1 9l16 8v16L2 25z" fill="#7b5636"/><path d="M33 9l-16 8v16l15-8z" fill="#5c3c25"/><path d="M1 9l16-8 16 8v3l-3 3-2-1-3 3-3-1-5 4-4-3-3 1-3-4-3 1-2-3z" fill="#4ba040"/><path d="M1 9l16-8 16 8-16 8z" fill="#69bd50"/>' },
  { name: 'iPhoto', art: '<path d="M3 3h25v17H3z" fill="#ddd2a8"/><path d="M1 11l22-10 8 21-24 10z" fill="#fff"/><path d="M4 13l18-8 5 15-18 8z" fill="#4475c7"/><path d="M12 15l6 9h-8z" fill="#71413a"/><circle cx="25" cy="20" r="6" fill="#aaa" stroke="#eee" stroke-width="2"/><circle cx="25" cy="20" r="3" fill="#272a31"/>' },
  { name: 'Image Capture', art: '<path d="M5 8h7l2-3h7l2 3h6v15H5z" fill="#b6b9bb" stroke="#666"/><path d="M7 10h6v3H7z" fill="#ddd"/><circle cx="20" cy="16" r="5" fill="#333" stroke="#ddd"/><circle cx="20" cy="16" r="2" fill="#4fa348"/><path d="M6 25l21-1-8 8-13-3z" fill="#555"/><path d="M8 28l12-2" stroke="#eee" stroke-width="2"/>' },
  { name: 'Skype', art: '<rect x="2" y="2" width="30" height="30" rx="14" fill="#3b87e5"/><text x="8" y="27" font-family="Liberation Sans" font-size="28" font-weight="bold" fill="#fff">S</text>' },
  { name: 'GarageBand', art: '<path d="M9 11h20v18H9z" fill="#a67c42" stroke="#5c3919" stroke-width="2"/><ellipse cx="8" cy="27" rx="6" ry="5" fill="#f08b22"/><ellipse cx="11" cy="22" rx="4" ry="4" fill="#9e2418"/><path d="M17 2L8 27" stroke="#512d1b" stroke-width="2.500"/>' },
  { name: 'TextEdit', art: '<path d="M1 12l24 2-5 18-15-2z" fill="#e0dc38"/><path d="M4 6l21-5 6 24-19 6z" fill="#fafafa" stroke="#bbb"/><path d="M9 10l13-3M10 14l14-3M12 18l13-3M13 22l10-2" stroke="#aaa"/><path d="M32 9l-9 21" stroke="#888" stroke-width="3"/>' },
  { name: 'Arcade', art: '<path d="M2 19l25-4 5 10-24 8z" fill="#a51028"/><path d="M3 16l22-5 7 10-25 6z" fill="#1d1743" stroke="#b91b38"/><path d="M18 8v12" stroke="#bbb" stroke-width="3"/><circle cx="18" cy="6" r="6" fill="#df1d25"/><circle cx="10" cy="20" r="3" fill="#403cc2"/>' },
  { name: 'QuickTime', art: '<circle cx="17" cy="17" r="15" fill="#54577b"/><circle cx="16" cy="17" r="10" fill="#5872df" stroke="#cad6f5" stroke-width="4"/><path d="M19 18l12 9v5h-6l-10-9z" fill="#434657"/>' },
  { name: 'Kindle', art: '<rect x="0" y="0" width="34" height="34" rx="3" fill="#3c3d3a"/><text x="1" y="15" font-family="Noto Sans" font-size="11" fill="#f5ab20">kindle</text><path d="M17 17l9 9h-5v6h-8v-6H8z" fill="#ddd"/>' },
  { name: 'divider' },
  { name: 'Documents', art: '<path d="M7 2h12l4 5v8H7z" fill="#eee"/><path d="M2 10V8h8l2 2h19v21H2z" fill="#7eacd3"/><path d="M1 13h32l-2 18H3z" fill="#a4c9e5"/>' },
  { name: 'Downloads', art: '<path d="M2 8V5h11l2 3h17v23H2z" fill="#7eacd3"/><path d="M1 11h32l-1 20H2z" fill="#a0c5e2"/><circle cx="17" cy="20" r="8" fill="#82accf"/><path d="M17 14v8M13 20l4 4 4-4M13 26h8" fill="none" stroke="#567ea6" stroke-width="2"/>' },
  { name: 'Artwork', art: '<path d="M2 1h30v31H2z" fill="#f4f2f5"/><path d="M2 21h30v11H2z" fill="#080808"/><text x="5" y="18" font-family="Liberation Sans" font-size="8" font-weight="bold" fill="#a44cb6" stroke="#412" stroke-width=".5">ARCH</text><path d="M22 22h11v11H22z" fill="#081b31" stroke="#1289b5"/><text x="23" y="31" font-family="Noto Sans" font-size="8" fill="#33bce6">Ps</text>' },
  { name: 'Sketches', art: '<path d="M2 9h30v17H2z" fill="#272829" stroke="#666"/><path d="M22 22h11v11H22z" fill="#081b31" stroke="#1289b5"/><text x="23" y="31" font-family="Noto Sans" font-size="8" fill="#33bce6">Ps</text>' },
  { name: 'Trash', art: '<path d="M5 6h24l-3 26H8z" fill="#7d8285"/><path d="M9 8l3 23M14 8l1 23M20 8l-1 23M25 8l-3 23" stroke="#b5b8ba"/><ellipse cx="17" cy="6" rx="12" ry="4" fill="#e5e7e8" stroke="#ccc"/><path d="M9 6l4-4 5 3 4-3 4 4-7 4z" fill="#fff"/>' }
]
</script>

<style>
body {
  background: #1b2b5b;
  overflow: hidden;
}
</style>

<style scoped>
* {
  box-sizing: border-box;
}

.desktop {
  display: flex;
  flex-direction: column;
  height: 100vh;
  font-family: 'Lucida Grande', 'Noto Sans', sans-serif;
  font-size: 11px;
  line-height: 16px;
  color: #111;
}

button,
select,
input {
  font: inherit;
  color: inherit;
  margin: 0;
}

button {
  padding: 0;
  border: none;
  background: none;
}

svg {
  flex-shrink: 0;
  display: block;
}

ul {
  margin: 0;
  padding: 0;
  list-style: none;
}

/* menu bar */
.menubar {
  position: relative;
  z-index: 10;
  display: flex;
  align-items: center;
  height: 22px;
  flex-shrink: 0;
  background: linear-gradient(#b5fde2, #98f5d2 55%, #67d9b1);
  border-bottom: 1px solid #176c50;
  font-size: 14px;
}

.apple {
  width: 44px;
  padding-left: 18px;
}

.menus {
  display: flex;
}

.menu-slot {
  position: relative;
}

.menu-name {
  height: 22px;
  padding: 0 9px 0 10px;
  white-space: nowrap;
}

.menu-name.bold {
  padding-right: 12px;
  font-weight: 700;
}

.menu-name.open {
  padding: 0 8px 0 9px;
  color: #fff;
  font-weight: 500;
  background: linear-gradient(#7a45ff, #5f00ff 60%);
}

.status {
  display: flex;
  align-items: center;
  gap: 12px;
  margin-left: auto;
  padding-right: 20px;
  white-space: nowrap;
}

.adobe {
  display: flex;
  align-items: center;
  gap: 8px;
}

.clock,
.user {
  font-size: 15px;
}

.user {
  font-weight: 600;
  color: #1f4437;
  padding: 0 10px 0 4px;
}

.dropdown {
  position: absolute;
  padding: 4px 0;
  background: rgba(255, 255, 255, 0.95);
  border-radius: 0 0 6px 6px;
  box-shadow: 0 6px 14px rgba(0, 0, 0, 0.45);
}

.layer-menu {
  top: 22px;
  left: 0;
  width: 287px;
  backdrop-filter: blur(2px);
}

.ruler-menu {
  top: 145px;
  left: 287px;
  width: 252px;
  background: #f9f2fe;
  border-radius: 0 6px 6px 6px;
}

.dropdown hr {
  height: 1px;
  margin: 6px 1px 5px;
  border: none;
  background: #dcd5e1;
}

.menu-item {
  position: relative;
  display: flex;
  justify-content: space-between;
  align-items: center;
  width: 100%;
  height: 19px;
  padding: 0 12px 0 21px;
  color: #000;
  white-space: pre;
}

.menu-item:disabled {
  color: #97919c;
}

.menu-item.active {
  color: #fff;
  font-weight: 500;
  background: linear-gradient(#7a3dff, #6000ff 40%, #5300f5);
}

.keys {
  font-family: 'Noto Sans', 'DejaVu Sans', sans-serif;
}

.arrow {
  border: solid transparent;
  border-width: 5px 0 5px 9px;
  border-left-color: #3d3a40;
}

.active .arrow {
  border-left-color: #fff;
}

.menu-check {
  position: absolute;
  left: 5px;
}

/* window layout */
.workspace {
  display: grid;
  grid-template-columns: 258px minmax(0, 1fr) 229px;
  flex: 1;
  min-height: 0;
}

.left,
.right {
  display: flex;
  min-height: 0;
  background: #d8d6d9;
  border-bottom: 6px solid #cfcdd0;
}

.left {
  border-right: 1px solid #6e6c70;
}

.right {
  padding-left: 7px;
  background: linear-gradient(90deg, #8a888b, #b9b7ba 3px, #d0ced1 6px, #d8d6d9 7px);
}

.tool-column {
  width: 42px;
  padding: 0 1px;
  background: #f3f6fe;
  border-right: 1px solid #b5b5ba;
}

.panels {
  display: flex;
  flex-direction: column;
  min-width: 0;
  background: #f3f6fe;
}

.left .panels {
  width: 208px;
  margin-left: 1px;
}

.right .panels {
  flex: 1;
  border-left: 1px solid #aaa8ad;
}

.side-column {
  width: 12px;
  background: #e9e8ec;
}

.collapse {
  display: flex;
  align-items: center;
  height: 21px;
  flex-shrink: 0;
  background: #e5e3e6;
  border-bottom: 1px solid #aeacb0;
}

.collapse.end {
  justify-content: flex-end;
}

.flip {
  transform: rotate(180deg);
}

.strip {
  display: flex;
  align-items: flex-start;
  height: 22px;
  flex-shrink: 0;
  padding-top: 1px;
  background: linear-gradient(#cfcdd1, #e4e2e6) no-repeat;
  background-size: 100% 17px;
  border-bottom: 1px solid #838389;
}

.strip-menu {
  width: 19px;
  height: 16px;
  flex-shrink: 0;
  background: linear-gradient(#888, #888) 8px 4px / 6px 1px no-repeat, linear-gradient(#888, #888) 8px 7px / 6px 1px no-repeat, linear-gradient(#888, #888) 8px 10px / 6px 1px no-repeat, linear-gradient(#888, #888) 5px 5px / 2px 5px no-repeat;
  border: 1px solid #aaa8ad;
}

.tab {
  display: flex;
  align-items: center;
  gap: 4px;
  height: 20px;
  padding: 0 3px;
  background: #f3f6fe;
  border: solid #99999f;
  border-width: 1px 1px 0;
  white-space: nowrap;
}

.tab.small {
  margin-left: auto;
  border-right: none;
}

/* tools */
.tool-group {
  display: flex;
  flex-direction: column;
  align-items: center;
  border: 1px solid #909096;
  border-top: none;
  margin-bottom: 1px;
}

.tool-group + .tool-group {
  border-top: 1px solid #909096;
}

.tool {
  width: 26px;
  height: 26px;
  padding: 1px;
}

.tool.selected {
  padding: 0;
  background: #c9ddf1;
  border: 1px solid #96b4d2;
}

.colors {
  position: relative;
  height: 39px;
}

.front-color,
.back-color {
  position: absolute;
  width: 24px;
  height: 24px;
}

.front-color {
  top: 0;
  left: 1px;
  background: #000;
  border: 2px solid #6fb2e4;
  box-shadow: inset 0 0 0 1px #000, inset 0 0 0 2px #fff;
}

.back-color {
  top: 14px;
  left: 15px;
  background: #fff;
  border: 1px solid #999ca8;
}

.clear-color {
  height: 11px;
  border: 1px solid #888;
  background: repeating-conic-gradient(#777 0 25%, #fff 0 50%) 0 0 / 10px 10px;
}

/* sub tool panel */
.subtool-group {
  height: 29px;
  padding: 1px;
  border-bottom: 2px solid #929298;
  flex-shrink: 0;
}

.subtool-tab {
  display: flex;
  align-items: center;
  gap: 3px;
  height: 24px;
  padding: 0 5px 0 1px;
  background: linear-gradient(#c6dcf0, #b7d0e9);
  border: 1px solid #8ea5bd;
}

.subtool-body {
  display: flex;
  height: 120px;
  flex-shrink: 0;
  border-bottom: 1px solid #a2a2a8;
}

.subtool-list {
  flex: 1;
}

.subtool-list li {
  display: flex;
  justify-content: space-between;
  height: 36px;
  padding-bottom: 1px;
  border-bottom: 1px solid #a5a7ae;
  border-right: 1px solid #a5a7ae;
}

.subtool-list li svg {
  margin: 2px;
}

.subtool-list li.selected {
  background: linear-gradient(#c7dcf1, #d0e2f5 50%, #b7cee7);
}

.subtool-list span {
  align-self: flex-end;
  padding-left: 6px;
}

.subtool-list .selected span {
  background: #cfdff1;
}

.gutter {
  width: 12px;
  background: #d9d9df;
  border-left: 1px solid #b5b5bb;
  border-top: 2px solid #aaaab0;
}

.panel-foot {
  display: flex;
  align-items: center;
  justify-content: flex-end;
  gap: 2px;
  height: 23px;
  flex-shrink: 0;
  padding-right: 3px;
  border-bottom: 1px solid #b4b3b8;
}

/* tool property panel */
.frame-banner {
  position: relative;
  display: flex;
  flex-direction: column;
  justify-content: space-between;
  height: 41px;
  flex-shrink: 0;
  padding-top: 1px;
  background: linear-gradient(90deg, #dadada, #a2a2a2 80%, #9a9a9a);
  border-bottom: 1px solid #888;
}

.banner-art {
  position: absolute;
  top: 0;
  right: 0;
}

.frame-name {
  position: relative;
  align-self: flex-start;
  padding: 0 5px 0 2px;
  background: #e2e3e8;
}

.frame-mode {
  position: relative;
  text-align: center;
}

.property-body {
  display: flex;
  height: 188px;
  flex-shrink: 0;
  overflow: hidden;
  border-bottom: 1px solid #a0a0a6;
}

.properties {
  flex: 1;
  min-width: 0;
  padding: 0 4px 0 3px;
}

.legend {
  display: flex;
  align-items: center;
  gap: 2px;
  height: 19px;
  white-space: nowrap;
}

.legend::before,
.legend::after {
  content: '';
  width: 5px;
  height: 1px;
  background: #d0d1d7;
}

.legend::after {
  flex: 1;
}

.row {
  display: flex;
  align-items: center;
  gap: 4px;
  height: 22px;
  margin-left: 8px;
  padding-left: 6px;
  white-space: nowrap;
  overflow: hidden;
}

.row.line {
  border-bottom: 1px solid #cfd0d6;
}

.row.fade {
  mask-image: linear-gradient(90deg, #000 85%, transparent);
}

.row select {
  appearance: none;
  width: 100%;
  height: 19px;
  padding: 0 10px 0 1px;
  text-align: center;
  border: 1px solid #aaabb0;
  border-radius: 2px;
  background: linear-gradient(#fbfcff, #e4e6ed);
}

.row:has(select) {
  position: relative;
}

.row:has(select)::after {
  content: '';
  position: absolute;
  right: 3px;
  border: solid transparent;
  border-width: 5px 5px 0;
  border-top-color: #555;
}

.row input {
  appearance: none;
  width: 14px;
  height: 14px;
  flex-shrink: 0;
  border: 1px solid #a2a3aa;
  border-radius: 2px;
  background: linear-gradient(#fff, #e8eaf1);
}

.row input:checked::before {
  content: '';
  display: block;
  width: 12px;
  height: 12px;
  background: #000;
  clip-path: polygon(10% 45%, 28% 42%, 42% 68%, 85% 0, 100% 0, 50% 100%, 38% 100%);
}

.row.color {
  gap: 2px;
}

.row.color span {
  min-width: 56px;
}

.color-button {
  flex: 1;
  height: 20px;
  padding: 4px;
  border: 1px solid #a5a6ad;
  border-radius: 2px;
  background: #f0f2f9;
}

.color-button i {
  display: block;
  height: 10px;
  background: #000;
}

.dim {
  color: #888;
  background: linear-gradient(#f3f6fe, #ccc);
}

.dim .color-button,
.dim i {
  background: #e5e6ea;
}

.dim i {
  border: 1px solid #bbb;
}

/* scroll bars */
.scrollbar {
  display: flex;
  flex-direction: column;
  width: 12px;
  flex-shrink: 0;
  background: #d6d6dc;
  border-left: 1px solid #b0b0b6;
}

.scrollbar button,
.hscroll button,
.tab-list {
  display: flex;
  align-items: center;
  justify-content: center;
  width: 11px;
  height: 12px;
  flex-shrink: 0;
  background: #f3f5fb;
  border: 1px solid #aaabb1;
}

.scrollbar button::before,
.hscroll button::before,
.tab-list::before {
  content: '';
  border: 3px solid transparent;
}

.scrollbar .up::before {
  border-top: none;
  border-bottom-color: #444;
}

.scrollbar .down::before,
.tab-list::before {
  border-bottom: none;
  border-top-color: #444;
}

.scrollbar .down {
  margin-top: auto;
}

.thumb {
  display: flex;
  align-items: center;
  justify-content: center;
  background: #f2f4fb;
  border: 1px solid #aaabb1;
  border-radius: 2px;
}

.thumb::before {
  content: '';
  width: 5px;
  height: 7px;
  background: repeating-linear-gradient(#888 0 1px, transparent 1px 3px);
}

.property-thumb {
  height: 116px;
}

/* brush sizes */
.brush-strip {
  border-bottom: none;
}

.mini-tab {
  display: flex;
  align-items: center;
  justify-content: center;
  flex: 1;
  height: 16px;
  border: 1px solid #aaa9ae;
  overflow: hidden;
}

.brush-tab {
  width: 50px;
  overflow: hidden;
}

.brush-tab span {
  font-weight: 500;
  overflow: hidden;
  mask-image: linear-gradient(90deg, #000 60%, transparent);
}

.brush-body {
  display: flex;
  flex: 1;
  min-height: 0;
  margin: 0 5px 0 6px;
  overflow: hidden;
  border: solid #8e8e94;
  border-width: 1px 1px 0;
}

.brush-grid {
  display: grid;
  grid-template-columns: repeat(6, 1fr);
  grid-auto-rows: 40px;
  flex: 1;
}

.brush {
  display: grid;
  border: solid #cdd0d9;
  border-width: 0 1px 1px 0;
  color: #85878d;
}

.dot {
  grid-area: 1 / 1;
  place-self: center;
  margin-bottom: 8px;
  border-radius: 50%;
  background: #a6a7ac;
}

.brush-label {
  grid-area: 1 / 1;
  align-self: end;
  height: 18px;
  line-height: 18px;
  background: rgba(243, 246, 254, 0.5);
}

.brush-thumb {
  height: 134px;
}

/* document window */
.document {
  display: flex;
  flex-direction: column;
  min-width: 0;
  min-height: 0;
  background: #d8d6d9;
  border-bottom: 6px solid #cfcdd0;
}

.toolbar {
  display: flex;
  align-items: center;
  gap: 6px;
  height: 26px;
  flex-shrink: 0;
  padding-left: 3px;
  background: #f3f6fe;
  border-bottom: 1px solid #747478;
}

.toolbar-space {
  width: 264px;
}

.toolbar-rule {
  width: 1px;
  height: 20px;
  background: #ccc;
}

.titlebar {
  display: flex;
  align-items: center;
  height: 24px;
  flex-shrink: 0;
  padding: 0 5px;
  background: linear-gradient(#a09ea1, #c2c0c3 30%, #d8d6d9);
  border-bottom: 1px solid #aaa8ab;
}

.window-buttons {
  width: 36px;
}

.titlebar h1 {
  flex: 1;
  margin: 0 40px 0 0;
  font-size: 14px;
  font-weight: 400;
  text-align: center;
  color: #444;
}

.doc-tabs {
  display: flex;
  align-items: center;
  justify-content: space-between;
  height: 20px;
  flex-shrink: 0;
  margin: 0 6px 0 5px;
  background: #e9e7e9;
  border-bottom: 1px solid #777b80;
}

.doc-tab {
  display: flex;
  align-items: center;
  gap: 5px;
  padding: 0 7px;
  background: #f5f5f8;
  font-size: 12px;
  height: 19px;
}

.doc-tab i {
  width: 6px;
  height: 6px;
  border-radius: 50%;
  background: #777;
}

.tab-list {
  height: 18px;
}

.canvas-grid {
  display: grid;
  grid-template-columns: 14px minmax(0, 1fr) 12px;
  grid-template-rows: 15px minmax(0, 1fr);
  flex: 1;
  min-height: 0;
  margin: 0 6px 0 5px;
}

.corner,
.ruler-top,
.ruler-left {
  background: #fff;
  border: solid #666;
  border-width: 0 1px 1px 0;
}

.ruler-left {
  grid-area: 2 / 1;
  border-bottom: none;
  background: linear-gradient(#666, #666) 0 30px / 100% 1px no-repeat #fff;
}

.canvas {
  grid-area: 2 / 2;
  padding: 30px 0 0 20px;
  background: #c8c8c8;
  overflow: hidden;
}

.canvas-scroll {
  grid-area: 1 / 3 / 3 / 4;
}

.canvas-thumb {
  height: 86px;
  margin-top: 60px;
}

.artboard {
  height: 100%;
  padding: 215px 0 0 193px;
  background: #9900ff;
}

.guide {
  height: 100%;
  padding: 21px 0 0 21px;
  border: double #a99fc4;
  border-width: 3px 0 0 3px;
}

.bleed {
  height: 100%;
  padding: 12px 0 0 12px;
  background: #330099;
}

.trim {
  height: 100%;
  border: solid #f00;
  border-width: 1px 0 0 1px;
}

.frame {
  height: 100%;
  background: #fff;
  border: solid #000;
  border-width: 12px 0 0 12px;
}

.statusbar {
  display: flex;
  align-items: center;
  gap: 4px;
  height: 12px;
  flex-shrink: 0;
  margin: 0 6px 0 5px;
  background: #f3f6fe;
  font-size: 12px;
}

.wedge {
  width: 64px;
  height: 11px;
  background: #aaafb9;
  clip-path: polygon(0 90%, 100% 0, 100% 100%, 0 100%);
}

.wedge.wide {
  width: 72px;
  margin-right: 6px;
  clip-path: polygon(0 100%, 50% 0, 100% 100%);
}

.hscroll {
  display: flex;
  flex: 1;
  background: #d6d6dc;
  margin-right: 12px;
}

.hthumb {
  width: 28px;
  margin-left: 20px;
  margin-right: auto;
  border: 1px solid #aaabb1;
  background: repeating-linear-gradient(90deg, #888 0 1px, transparent 1px 3px) center / 8px 6px no-repeat #f3f5fb;
}

.hscroll .back::before {
  border-left: none;
  border-right-color: #444;
}

.hscroll .forward::before {
  border-right: none;
  border-left-color: #444;
}

/* layer panel */
.layer-options {
  display: flex;
  align-items: center;
  gap: 3px;
  height: 21px;
  flex-shrink: 0;
  padding: 0 2px 0 1px;
}

.stepper {
  display: flex;
  align-items: center;
  height: 20px;
  padding: 0 3px;
  border: 1px solid #aaabb1;
  border-radius: 2px;
  background: linear-gradient(#fbfcff, #e6e8ee);
}

.stepper::after {
  content: '';
  width: 9px;
  height: 13px;
  margin-left: auto;
  flex-shrink: 0;
  background: #555;
  clip-path: polygon(50% 0, 100% 42%, 0 42%, 0 58%, 100% 58%, 50% 100%, 0 58%, 0 42%);
}

.stepper.plain {
  border: none;
  background: none;
  padding: 0;
}

.stepper.plain::after {
  background: #aaa;
}

.stepper select {
  appearance: none;
  flex: 1;
  min-width: 0;
  border: none;
  background: none;
  text-align: center;
}

.mode {
  width: 103px;
}

.mode select {
  padding-right: 2px;
}

.opacity {
  appearance: none;
  width: 60px;
  height: 18px;
  margin: 0 1px 0 2px;
  background: repeating-conic-gradient(#c4c4c4 0 25%, #e8e8e8 0 50%) left center / 10px 8px repeat-x;
}

.opacity::-webkit-slider-thumb {
  appearance: none;
  width: 4px;
  height: 18px;
  border: 1px solid #999;
  background: #eee;
}

.amount {
  width: 24px;
  padding: 0;
  border: none;
  background: none;
}

.palette {
  width: 38px;
  padding: 0 2px;
}

.palette i {
  width: 18px;
  height: 15px;
  border: 1px solid #b5b6bb;
  background: #f6f7fb;
}

.layer-tools {
  margin-left: auto;
}

.mask {
  width: 35px;
  padding: 0 1px 0 2px;
}

.layer-body {
  display: flex;
  flex: 1;
  min-height: 0;
  margin-top: 2px;
  border: solid #77787e;
  border-width: 1px 0 1px 1px;
}

.layers {
  flex: 1;
  min-width: 0;
  margin-left: 3px;
  border-left: 1px solid #88898f;
}

.layer {
  display: flex;
  height: 41px;
}

.layer.folder {
  height: 31px;
}

.eye,
.edit {
  display: flex;
  align-items: center;
  justify-content: center;
  width: 21px;
  border: solid #a5a7b0;
  border-width: 0 1px 0 0;
  flex-shrink: 0;
}

.edit {
  width: 17px;
}

.layer-main {
  display: flex;
  align-items: center;
  gap: 4px;
  flex: 1;
  min-width: 0;
  overflow: hidden;
  padding-left: 6px;
  border-bottom: 1px solid #a5a7b0;
}

.layer:not(.child):not(.selected) .eye,
.layer:not(.child):not(.selected) .edit {
  border-bottom-width: 1px;
}

.selected .layer-main {
  padding-left: 2px;
  background: linear-gradient(#c9dcf0, #d8e7f7 50%, #bcd2e8);
}

.child .layer-main {
  margin-left: 13px;
  padding-left: 8px;
}

.triangle {
  border: solid transparent;
  border-width: 5px 0 5px 6px;
  border-left-color: #000;
}

.triangle.open {
  border-width: 5px 4px 0;
  border-color: #000 transparent transparent;
}

.folder .triangle {
  margin-right: 4px;
}

.thumbnail {
  display: flex;
  flex-direction: column;
  justify-content: center;
  width: 34px;
  height: 34px;
  flex-shrink: 0;
  border: 1px solid #000;
  background: #606060;
}

.thumbnail i {
  height: 12px;
  background: #fff;
}

.thumbnail.clear i {
  background: repeating-conic-gradient(#d4d4d4 0 25%, #fff 0 50%) 0 0 / 10px 10px;
}

.thumbnail.white {
  background: #fff;
}

.layer-text {
  display: flex;
  flex-direction: column;
  justify-content: space-between;
  align-self: stretch;
  padding: 2px 0 2px;
  white-space: nowrap;
}

.folder .layer-text {
  padding: 2px 0 3px;
  line-height: 13px;
}

.layer-mode {
  display: flex;
  align-items: center;
  gap: 3px;
  height: 17px;
}

.folder .layer-mode {
  height: 13px;
}

.pencil {
  align-self: flex-start;
  margin: 3px 5px 0 auto;
}

.layer-foot {
  padding: 0 4px 0 2px;
}

.foot-space {
  flex: 1;
}

.layer-property {
  display: flex;
  height: 90px;
  flex-shrink: 0;
  margin-right: 2px;
  border-left: 1px solid #77787e;
}

.property-controls {
  flex: 1;
  padding: 0 4px 0 3px;
}

.expression,
.navigation {
  display: flex;
  gap: 3px;
  height: 21px;
  padding-left: 13px;
}

.navigation {
  height: 24px;
}

.gray {
  flex: 1;
  padding-left: 32px;
}

.gray i {
  width: 14px;
  height: 14px;
  background: linear-gradient(90deg, #222, #ddd);
}

.gray select {
  padding-left: 6px;
  text-align: left;
}

.ink {
  width: 24px;
  height: 20px;
  border: 1px solid #9ab4ce;
  border-radius: 2px;
  background: #cfe1f2;
}

.ink::before {
  content: '';
  display: block;
  width: 14px;
  height: 14px;
  margin: auto;
  background: #fff;
  border: 1px solid #8ea5bd;
}

.ink.black::before {
  background: #000;
}

.navigation button {
  display: flex;
  align-items: center;
  justify-content: center;
  flex: 1;
  border: 1px solid #aaabb1;
  border-radius: 2px;
  background: linear-gradient(#fafbff, #e4e6ed);
}

/* dock */
.dock {
  position: relative;
  display: flex;
  height: 53px;
  flex-shrink: 0;
  padding: 9px 29px 0 32px;
  background: linear-gradient(170deg, #16204a, #263b75 40%, #1b2b5b 60%, #2b4480);
}

.dock::before {
  content: '';
  position: absolute;
  inset: 24px 16px 0;
  background: linear-gradient(#9699aa, #c9cad6 80%, #fff 88%, #96979f 90%);
  clip-path: polygon(16px 0, calc(100% - 13px) 0, 100% 90%, 100% 100%, 0 100%, 0 90%);
}

.dock-app {
  position: relative;
  display: flex;
  flex-direction: column;
  align-items: center;
  justify-content: space-between;
  flex: 1;
  min-width: 0;
}

.dock-app.running::after {
  content: '';
  width: 12px;
  height: 3px;
  background: #e6f6ff;
  border-radius: 2px;
  box-shadow: 0 0 3px #bfe8ff;
}

.dock-divider {
  position: relative;
  flex: 0.5;
  height: 20px;
  margin-top: 17px;
  background: linear-gradient(70deg, transparent 48%, #777a88 48% 52%, transparent 52%);
}
</style>
